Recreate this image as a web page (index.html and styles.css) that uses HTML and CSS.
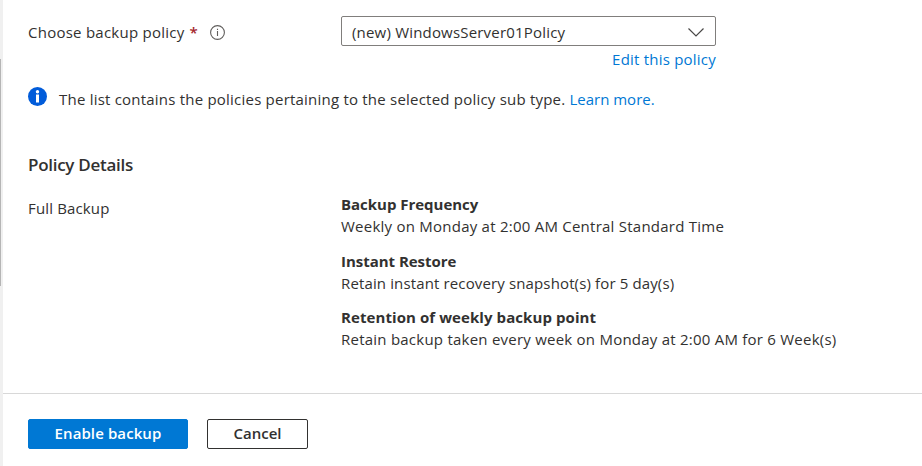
FILE: index.html
```html
<!DOCTYPE html>
<html lang="en">
<head>
<meta charset="utf-8">
<title>Backup policy</title>
<link rel="stylesheet" href="styles.css">
</head>
<body>
<div class="app">
  <div class="rail"><div class="rail-thumb"></div></div>
  <main class="panel">
    <section class="content">
      <div class="row field">
        <div class="label"><span class="t t-choose">Choose backup policy</span><span class="required">*</span>
          <svg class="info" viewBox="0 0 15 15"><circle cx="7.5" cy="7.5" r="6.9"/><path d="M7.5 6v5M7.5 3.8v1.2"/></svg>
        </div>
        <div class="control">
          <div class="select"><span class="t t-select">(new) WindowsServer01Policy</span>
            <svg class="chevron" viewBox="0 0 16 9"><path d="M.5.5L8 8 15.500.5"/></svg>
          </div>
          <a class="edit"><span class="t t-edit">Edit this policy</span></a>
        </div>
      </div>
      <div class="notice">
        <svg class="notice-icon" viewBox="0 0 19 19"><circle cx="9.500" cy="9.500" r="9.500"/><path d="M8 7.500h3v8H8z"/><circle class="dot" cx="9.500" cy="4.700" r="1.700"/></svg>
        <span class="t t-notice">The list contains the policies pertaining to the selected policy sub type.</span><a class="t t-learn">Learn more.</a>
      </div>
      <h2><span class="t t-details">Policy Details</span></h2>
      <div class="row details">
        <div class="label"><span class="t t-full">Full Backup</span></div>
        <dl>
          <dt><span class="t t-freq">Backup Frequency</span></dt>
          <dd><span class="t t-weekly">Weekly on Monday at 2:00 AM Central Standard Time</span></dd>
          <dt><span class="t t-instant">Instant Restore</span></dt>
          <dd class="tight"><span class="t t-snap">Retain instant recovery snapshot(s) for 5 day(s)</span></dd>
          <dt><span class="t t-ret">Retention of weekly backup point</span></dt>
          <dd><span class="t t-taken">Retain backup taken every week on Monday at 2:00 AM for 6 Week(s)</span></dd>
        </dl>
      </div>
    </section>
    <footer><button class="primary">Enable backup</button><button>Cancel</button></footer>
  </main>
</div>
</body>
</html>
```
FILE: styles.css
```css
* { box-sizing: border-box; }
body { margin: 0; background: #fff; color: #323130; font: 15px/22px "Open Sans", "Noto Sans", sans-serif; }
.app { display: flex; width: 922px; height: 466px; overflow: hidden; }
.rail { width: 3px; background: #f0f0f0; padding-top: 59px; }
.rail-thumb { width: 1px; height: 227px; background: #b5b5b5; }
.panel { flex: 1; display: flex; flex-direction: column; }
.content { height: 393px; padding: 16px 0 0 25px; }
.row { display: grid; grid-template-columns: 313px 1fr; }
.t { display: inline-block; white-space: nowrap; }
.label { display: flex; align-items: center; height: 32px; }
.required { color: #a4262c; font-weight: 600; margin: 0 12px 0 5px; }
.info { width: 15px; height: 15px; fill: none; stroke: #605e5c; stroke-width: 1.1; }
.control { width: 375px; }
.select { height: 30px; border: 1px solid #807e7c; border-radius: 2px; padding: 2px 11px 0 10px; display: flex; align-items: center; justify-content: space-between; }
.chevron { width: 16px; height: 9px; fill: none; stroke: #494847; stroke-width: 1.2; }
.edit { display: flex; justify-content: flex-end; margin-top: 2px; }
a { color: #0078d4; }
.notice { display: flex; align-items: center; margin-top: 18px; }
.notice-icon { width: 19px; height: 19px; margin: -5px 12px 0 0; fill: #015cda; }
.notice-icon path, .notice-icon .dot { fill: #fff; }
.t-choose { letter-spacing: .25px; }
.t-select { letter-spacing: .19px; }
.t-edit { letter-spacing: .22px; }
.t-notice { letter-spacing: .215px; }
.t-learn { margin-left: 4px; }
.t-full { letter-spacing: .15px; }
.t-freq { letter-spacing: -.02px; }
.t-weekly { letter-spacing: .24px; }
.t-instant { letter-spacing: -.03px; }
.t-snap { letter-spacing: .135px; }
.t-ret { letter-spacing: .08px; }
.t-taken { letter-spacing: .235px; }
.t-details { letter-spacing: -.28px; }
h2 { margin: 43px 0 0; font-size: 17px; line-height: 24px; font-weight: 600; }
.details { margin-top: 16px; }
.details .label { height: 30px; }
dl { margin: 0; }
dt { font-weight: 700; height: 22px; }
dd { margin: 0 0 13px; height: 22px; }
.tight { margin-bottom: 12px; }
footer { flex: 1; border-top: 1px solid #d8d8d8; padding: 25px 0 0 25px; display: flex; gap: 19px; align-items: flex-start; }
button { height: 30px; width: 101px; border: 1px solid #323130; border-radius: 2px; background: #fff; color: #323130; font: 600 15px/20px "Open Sans", sans-serif; padding: 0 0 2px; }
.primary { width: 160px; color: #fff; background: #0078d4; border-color: #0078d4; letter-spacing: .1px; }
```
